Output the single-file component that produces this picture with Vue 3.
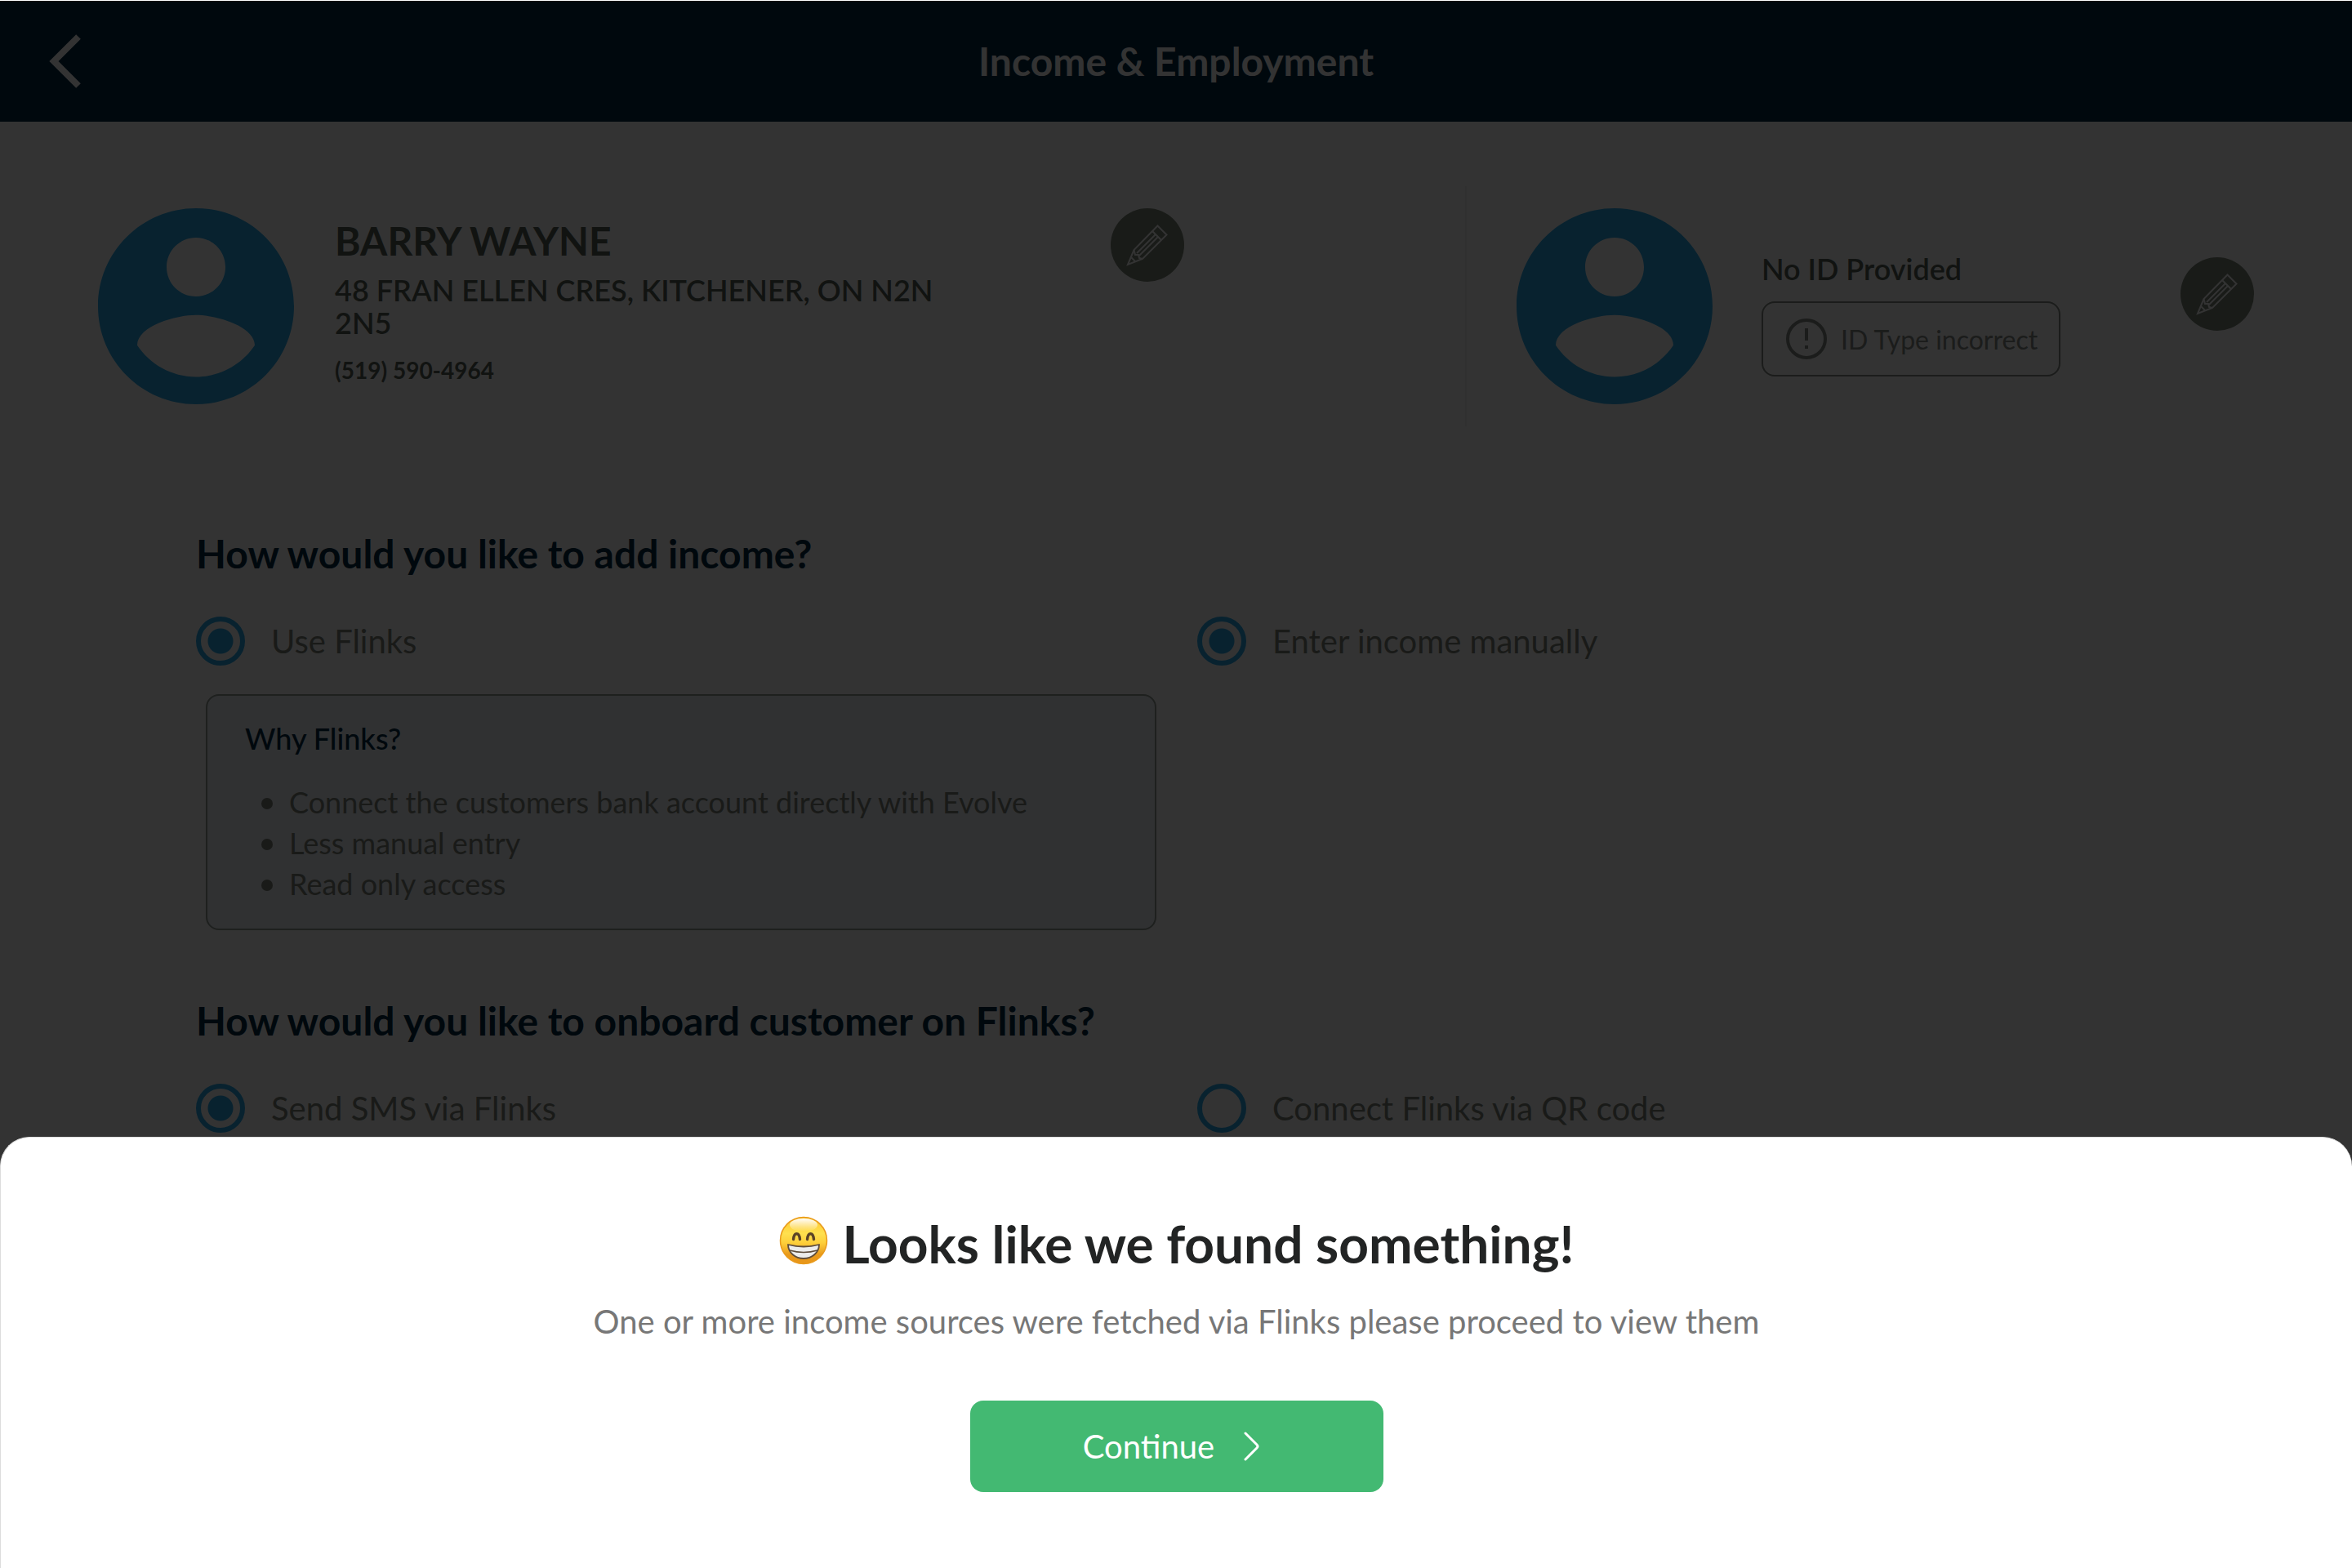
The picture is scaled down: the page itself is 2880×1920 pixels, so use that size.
<template>
    <div class="screen">
        <header class="topbar">
            <button class="back" type="button" aria-label="Back">
                <svg viewBox="0 0 40 66" width="40" height="66">
                    <path d="M36 3L6 33l30 30" fill="none" stroke="#fff" stroke-width="8" />
                </svg>
            </button>
            <h1>Income &amp; Employment</h1>
        </header>

        <section class="profile">
            <div class="person">
                <svg class="avatar" viewBox="2 2 20 20">
                    <path :d="avatarPath" />
                </svg>
                <div class="details">
                    <h2>BARRY WAYNE</h2>
                    <p class="address">48 FRAN ELLEN CRES, KITCHENER, ON N2N 2N5</p>
                    <p class="phone">(519) 590-4964</p>
                </div>
                <button class="edit" type="button" aria-label="Edit customer">
                    <svg viewBox="0 0 90 90">
                        <path v-for="d in pencilPaths" :key="d" :d="d" />
                    </svg>
                </button>
            </div>
            <div class="identity">
                <svg class="avatar" viewBox="2 2 20 20">
                    <path :d="avatarPath" />
                </svg>
                <div class="id-status">
                    <p class="id-title">No ID Provided</p>
                    <div class="warning">
                        <svg viewBox="0 0 50 50">
                            <circle cx="25" cy="25" r="23" />
                            <path d="M25 12v15M25 33v4" />
                        </svg>
                        <span>ID Type incorrect</span>
                    </div>
                </div>
                <button class="edit" type="button" aria-label="Edit ID">
                    <svg viewBox="0 0 90 90">
                        <path v-for="d in pencilPaths" :key="d" :d="d" />
                    </svg>
                </button>
            </div>
        </section>

        <main class="form">
            <fieldset>
                <legend>How would you like to add income?</legend>
                <div class="options">
                    <label><input type="radio" name="use-flinks" checked>Use Flinks</label>
                    <label><input type="radio" name="manual" checked>Enter income manually</label>
                </div>
                <div class="why">
                    <h3>Why Flinks?</h3>
                    <ul>
                        <li v-for="reason in reasons" :key="reason">{{ reason }}</li>
                    </ul>
                </div>
            </fieldset>
            <fieldset>
                <legend>How would you like to onboard customer on Flinks?</legend>
                <div class="options">
                    <label><input v-model="onboard" type="radio" name="onboard" value="sms">Send SMS via Flinks</label>
                    <label><input v-model="onboard" type="radio" name="onboard" value="qr">Connect Flinks via QR code</label>
                </div>
            </fieldset>
        </main>

        <div class="overlay"></div>

        <div class="sheet" role="dialog" aria-labelledby="sheet-title">
            <h2 id="sheet-title">
                <svg class="emoji" viewBox="0 0 60 60">
                    <defs>
                        <linearGradient id="face" x1="0" y1="0" x2="0" y2="1">
                            <stop offset="0" stop-color="#fdc62b" />
                            <stop offset="0.35" stop-color="#ffe04f" />
                            <stop offset="0.55" stop-color="#fdcf3a" />
                            <stop offset="0.8" stop-color="#e99a1b" />
                            <stop offset="1" stop-color="#e7951a" />
                        </linearGradient>
                        <linearGradient id="shine" x1="0" y1="0" x2="0" y2="1">
                            <stop offset="0" stop-color="#fff" />
                            <stop offset="1" stop-color="#fff" stop-opacity="0" />
                        </linearGradient>
                    </defs>
                    <circle cx="30" cy="30" r="28.5" fill="url(#face)" stroke="#e99a1b" stroke-width="1.5" />
                    <ellipse cx="30" cy="11" rx="17" ry="8" fill="url(#shine)" />
                    <path d="M17.5 28.5c1-9 7-9 8 0M34.5 28.5c1-9 7-9 8 0" fill="none" stroke="#5c4326" stroke-width="3.4" stroke-linecap="round" />
                    <path d="M11 35q19 5 38 0c0 10-9 17-19 17s-19-7-19-17z" fill="#ececec" stroke="#5f4d3c" stroke-width="1.8" stroke-linejoin="round" />
                    <path d="M13 42q17 5 34 0" fill="none" stroke="#5f4d3c" stroke-width="1.4" />
                </svg>
                Looks like we found something!
            </h2>
            <p>One or more income sources were fetched via Flinks please proceed to view them</p>
            <button class="continue" type="button">
                Continue
                <svg viewBox="0 0 20 36" width="20" height="36">
                    <path d="M2 2l14 14q2 2 0 4L2 34" fill="none" stroke="#fff" stroke-width="3" stroke-linecap="round" />
                </svg>
            </button>
        </div>
    </div>
</template>

<script setup>
import { ref } from 'vue';

const onboard = ref('sms');

const reasons = [
    'Connect the customers bank account directly with Evolve',
    'Less manual entry',
    'Read only access'
];

const avatarPath = 'M12 2C6.48 2 2 6.48 2 12s4.48 10 10 10 10-4.48 10-10S17.52 2 12 2zm0 3c1.66 0 3 1.34 3 3s-1.34 3-3 3-3-1.34-3-3 1.34-3 3-3zm0 14.2c-2.5 0-4.71-1.28-6-3.22.03-1.99 4-3.08 6-3.08 1.99 0 5.97 1.09 6 3.08-1.29 1.94-3.5 3.22-6 3.22z';

// Outline, eraser band, the two long edges, sharpened collar and lead tip
const pencilPaths = [
    'M57.5 21.5L68.5 32.5L39 62L21 69L28.5 51Z',
    'M51 28L62 39',
    'M32 55L55 32',
    'M35 58L58 35',
    'M28.5 51L30 57L34 57L35 61L39 62',
    'M25 60L30 65'
];
</script>

<style>
body {
    margin: 0;
    background: #fff;
}
</style>

<style scoped>
.screen {
    position: relative;
    min-height: 100vh;
    box-sizing: border-box;
    overflow: hidden;
    font-family: Lato, "Open Sans", sans-serif;
    color: #7d8378;
}

h1, h2, h3, p, ul, fieldset, legend {
    margin: 0;
    padding: 0;
    border: 0;
}

button {
    border: none;
    padding: 0;
    cursor: pointer;
    font-family: inherit;
}

.topbar {
    display: grid;
    grid-template-columns: 120px 1fr 120px;
    align-items: center;
    height: 148px;
    background: #002841;
    border-top: 1px solid #fff;
}

.back {
    display: flex;
    padding-left: 60px;
    background: none;
}

.topbar h1 {
    font-size: 48px;
    font-weight: 700;
    line-height: 60px;
    text-align: center;
    color: #fff;
}

.profile {
    display: grid;
    grid-template-columns: 1674fr 966fr;
    padding: 79px 120px 0;
}

.person, .identity {
    display: flex;
    align-items: flex-start;
    padding-top: 27px;
    height: 267px;
}

.identity {
    padding-left: 61px;
    border-left: 2px solid #eeeef0;
}

.avatar {
    flex: none;
    width: 240px;
    height: 240px;
    fill: #28aaeb;
}

.details {
    width: 800px;
    margin-left: 50px;
    padding-top: 10px;
    color: #565e58;
}

.details h2 {
    font-size: 48px;
    font-weight: 700;
    line-height: 60px;
}

.address, .id-title {
    font-size: 36px;
    font-weight: 600;
    line-height: 40px;
}

.address {
    margin-top: 10px;
}

.phone {
    margin-top: 20px;
    font-size: 28px;
    font-weight: 700;
    line-height: 36px;
}

.edit {
    flex: none;
    width: 90px;
    height: 90px;
    margin-left: 150px;
    border-radius: 50%;
    background: #7d8778;
}

.edit svg {
    display: block;
    fill: none;
    stroke: #fff;
    stroke-width: 2;
}

.id-status {
    margin-left: 60px;
    padding-top: 54px;
}

.id-title {
    color: #565e58;
}

.warning {
    display: flex;
    align-items: center;
    gap: 17px;
    box-sizing: border-box;
    height: 92px;
    margin-top: 20px;
    padding: 0 26px 0 28px;
    border: 2px solid #868b86;
    border-radius: 16px;
    font-size: 32px;
    color: #868b86;
}

.warning svg {
    width: 50px;
    height: 50px;
    fill: none;
    stroke: #868b86;
    stroke-width: 4;
}

.identity .edit {
    margin: 60px 0 0 auto;
}

.form {
    padding: 126px 240px 0;
}

legend {
    font-size: 48px;
    font-weight: 700;
    line-height: 60px;
    color: #002841;
}

.options {
    display: grid;
    grid-template-columns: 1226px 1fr;
    margin-top: 47px;
}

.options label {
    display: flex;
    align-items: center;
    gap: 32px;
    height: 60px;
    font-size: 40px;
}

.options input {
    appearance: none;
    width: 60px;
    height: 60px;
    margin: 0;
    border: 6px solid #28aaeb;
    border-radius: 50%;
}

.options input:checked {
    background: radial-gradient(circle, #28aaeb 15px, transparent 16px);
}

.why {
    box-sizing: border-box;
    width: 1164px;
    margin: 35px 0 81px 12px;
    padding: 27px 46px 30px;
    border: 2px solid #969e98;
    border-radius: 16px;
    background: #eff3fa;
    font-size: 36px;
}

.why h3 {
    font-size: 36px;
    font-weight: 500;
    line-height: 50px;
    color: #002841;
}

.why ul {
    margin-top: 28px;
    padding-left: 54px;
    line-height: 50px;
    list-style: none;
}

.why li {
    position: relative;
}

.why li::before {
    content: "";
    position: absolute;
    left: -34px;
    top: 20px;
    width: 14px;
    height: 14px;
    border-radius: 50%;
    background: #7d8378;
}

.overlay {
    position: absolute;
    inset: 1px 0 0;
    background: rgba(0, 0, 0, 0.8);
}

.sheet {
    position: absolute;
    left: 0;
    right: 0;
    bottom: 0;
    display: flex;
    flex-direction: column;
    align-items: center;
    padding: 90px 0 93px;
    border: solid #ddd;
    border-width: 1px 0 0 1px;
    border-radius: 36px 36px 0 0;
    background: #fff;
}

.sheet h2 {
    display: flex;
    gap: 18px;
    font-size: 64px;
    font-weight: 700;
    line-height: 80px;
    color: #222424;
}

.emoji {
    width: 60px;
    height: 60px;
    margin-top: 6px;
}

.sheet p {
    margin-top: 30px;
    font-size: 40px;
    line-height: 50px;
    color: #777;
}

.continue {
    display: flex;
    align-items: center;
    justify-content: center;
    gap: 36px;
    width: 506px;
    height: 112px;
    margin-top: 72px;
    padding-right: 12px;
    border-radius: 16px;
    background: #43b972;
    color: #fff;
    font-size: 40px;
}
</style>
